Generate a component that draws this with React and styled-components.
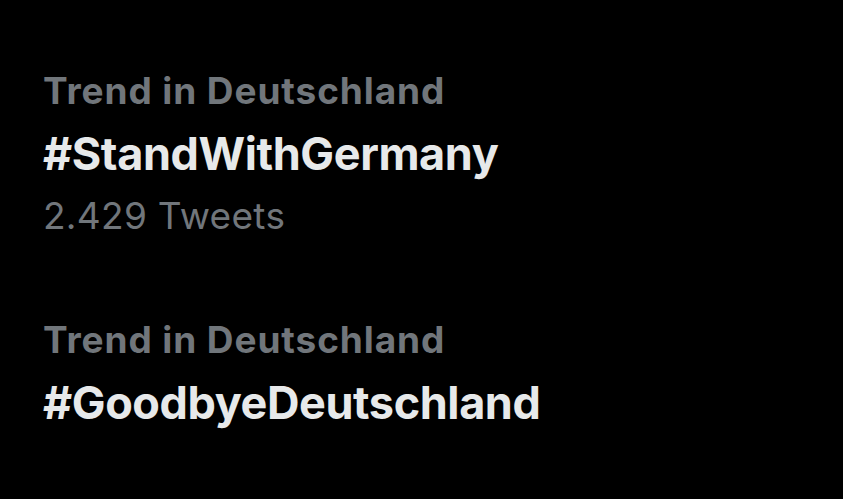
import React from "react";
import styled, { createGlobalStyle } from "styled-components";

const Global = createGlobalStyle`
  html, body { margin: 0; padding: 0; background: #000; }
  body { font-family: Inter, "Liberation Sans", Arial, sans-serif; }
`;

const Page = styled.div`
  width: 843px;
  height: 499px;
  background: #000;
  box-sizing: border-box;
  padding: 65px 0 0 43px;
  display: flex;
  flex-direction: column;
  gap: 72px;
  overflow: hidden;
`;

const Trend = styled.article`
  display: flex;
  flex-direction: column;
`;

const Context = styled.div`
  color: #71767b;
  font-size: 37px;
  font-weight: 700;
  line-height: 52px;
  letter-spacing: 0.9px;
  white-space: nowrap;
`;

const Tag = styled.div`
  color: #e7e9ea;
  font-size: 45px;
  font-weight: 700;
  line-height: 73px;
  letter-spacing: -0.4px;
  white-space: nowrap;
`;

const Count = styled.div`
  color: #71767b;
  font-size: 37px;
  font-weight: 400;
  line-height: 52px;
  letter-spacing: 0.3px;
  white-space: nowrap;
`;

const trends = [
  { context: "Trend in Deutschland", tag: "#StandWithGermany", count: "2.429 Tweets" },
  { context: "Trend in Deutschland", tag: "#GoodbyeDeutschland" },
];

export default function App() {
  return (
    <>
      <Global />
      <Page>
        {trends.map((t) => (
          <Trend key={t.tag}>
            <Context>{t.context}</Context>
            <Tag>{t.tag}</Tag>
            {t.count && <Count>{t.count}</Count>}
          </Trend>
        ))}
      </Page>
    </>
  );
}
